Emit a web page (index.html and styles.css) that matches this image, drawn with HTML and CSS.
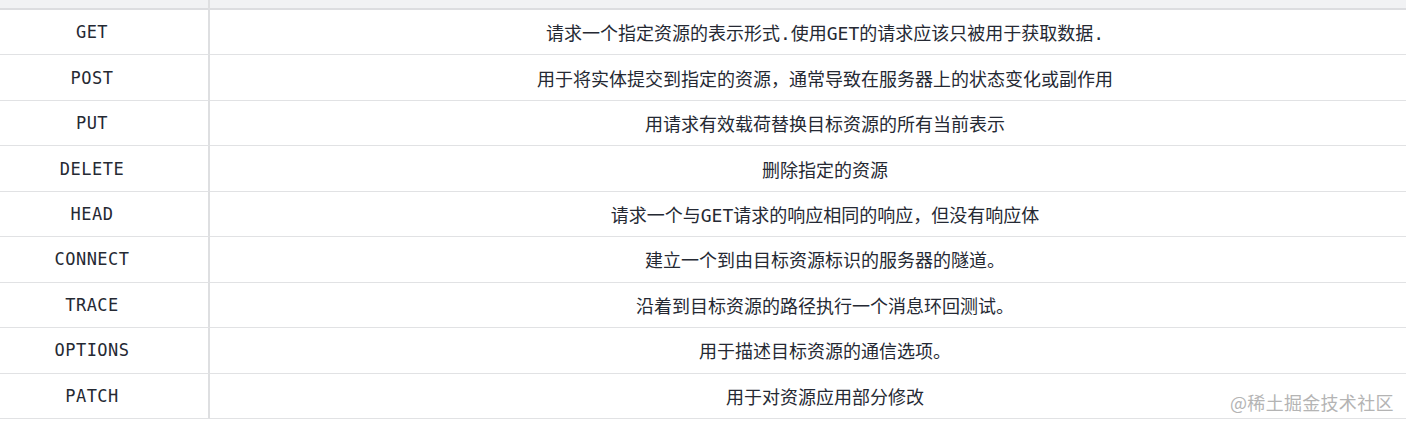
FILE: index.html
```html
<!DOCTYPE html>
<html lang="zh">
<head>
<meta charset="utf-8">
<link rel="stylesheet" href="styles.css">
</head>
<body>
<div class="table">
  <div class="head first"></div>
  <div class="head"></div>

  <div class="cell first">GET</div>
  <div class="cell">请求一个指定资源的表示形式.使用GET的请求应该只被用于获取数据.</div>

  <div class="cell first">POST</div>
  <div class="cell">用于将实体提交到指定的资源，通常导致在服务器上的状态变化或副作用</div>

  <div class="cell first">PUT</div>
  <div class="cell">用请求有效载荷替换目标资源的所有当前表示</div>

  <div class="cell first">DELETE</div>
  <div class="cell">删除指定的资源</div>

  <div class="cell first">HEAD</div>
  <div class="cell">请求一个与GET请求的响应相同的响应，但没有响应体</div>

  <div class="cell first">CONNECT</div>
  <div class="cell">建立一个到由目标资源标识的服务器的隧道。</div>

  <div class="cell first">TRACE</div>
  <div class="cell">沿着到目标资源的路径执行一个消息环回测试。</div>

  <div class="cell first">OPTIONS</div>
  <div class="cell">用于描述目标资源的通信选项。</div>

  <div class="cell first">PATCH</div>
  <div class="cell">用于对资源应用部分修改</div>
</div>
<div class="watermark">@稀土掘金技术社区</div>
</body>
</html>
```

FILE: styles.css
```css
html, body {
  margin: 0;
  padding: 0;
  background: #ffffff;
  width: 1406px;
  height: 427px;
  overflow: hidden;
  position: relative;
}

.table {
  display: grid;
  grid-template-columns: 210px 1fr;
  width: 1406px;
  font-family: "DejaVu Sans Mono", "Noto Sans CJK SC", monospace;
  font-size: 18px;
  color: #252933;
}

.head {
  height: 10px;
  box-sizing: border-box;
  background: #f1f2f4;
  border-bottom: 2px solid #dcdde0;
}

.first {
  border-right: 2px solid #dedfe1;
}

.cell {
  box-sizing: border-box;
  height: 45.44px;
  border-bottom: 1px solid #e1e2e4;
  display: flex;
  align-items: center;
  justify-content: center;
  padding-left: 34px;
  white-space: nowrap;
}

.cell.first {
  padding-left: 0;
  padding-right: 24px;
  font-size: 17px;
  letter-spacing: 0.5px;
}

.watermark {
  position: absolute;
  left: 1230px;
  top: 389px;
  font-family: "Noto Sans CJK SC", "Noto Sans", sans-serif;
  font-size: 18px;
  color: #b4b4b4;
  letter-spacing: 0.3px;
}
```
